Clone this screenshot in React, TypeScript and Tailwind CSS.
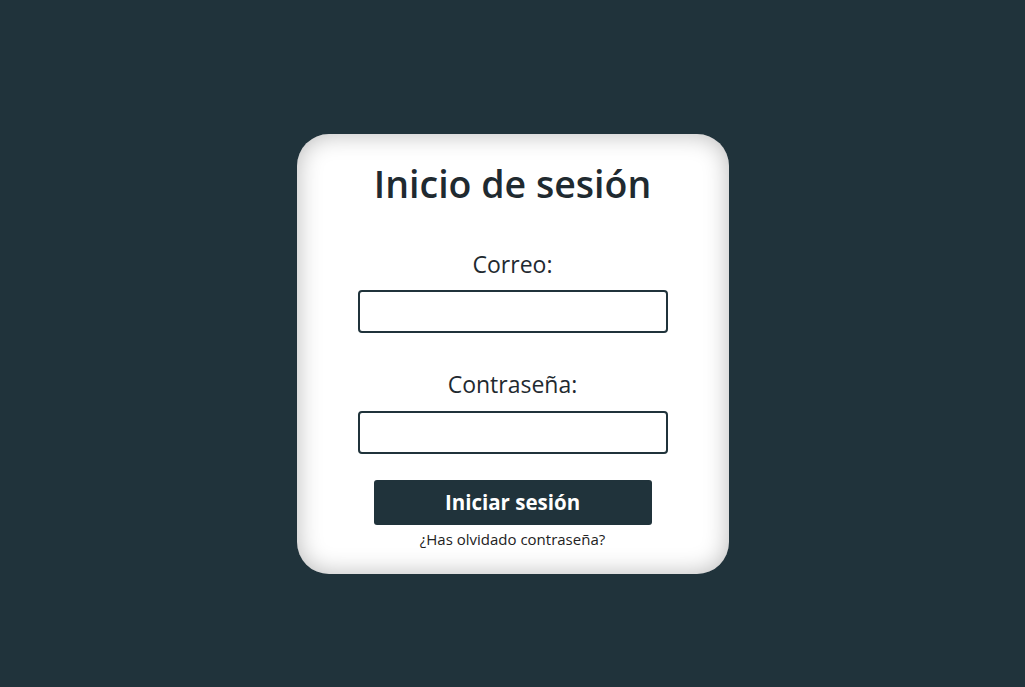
export default function App() {
  return (
    <div
      className="min-h-[687px] w-full bg-[#20333b] flex justify-center pt-[134px]"
      style={{ fontFamily: '"Open Sans", "Noto Sans", sans-serif' }}
    >
      <div className="w-[432px] h-[440px] rounded-[32px] bg-white shadow-[inset_0_0_24px_rgba(0,0,0,0.28)] flex flex-col items-center pt-[26px] text-[#1f2a30]">
        <h1 className="text-[37.5px] leading-[48px] font-semibold">Inicio de sesión</h1>

        <label className="mt-[40px] text-[23px] leading-[32px]">Correo:</label>
        <input
          type="email"
          className="mt-[10px] w-[310px] h-[43px] rounded-[4px] border-2 border-[#20333b] bg-white outline-none"
        />

        <label className="mt-[35px] text-[23px] leading-[32px]">Contraseña:</label>
        <input
          type="password"
          className="mt-[11px] w-[310px] h-[43px] rounded-[4px] border-2 border-[#20333b] bg-white outline-none"
        />

        <button className="mt-[26px] w-[278px] h-[45px] rounded-[3px] bg-[#20333b] text-white text-[20.5px] font-bold">
          Iniciar sesión
        </button>
        <a className="mt-[4px] text-[15px] leading-[20px] text-[#222]">¿Has olvidado contraseña?</a>
      </div>
    </div>
  );
}
